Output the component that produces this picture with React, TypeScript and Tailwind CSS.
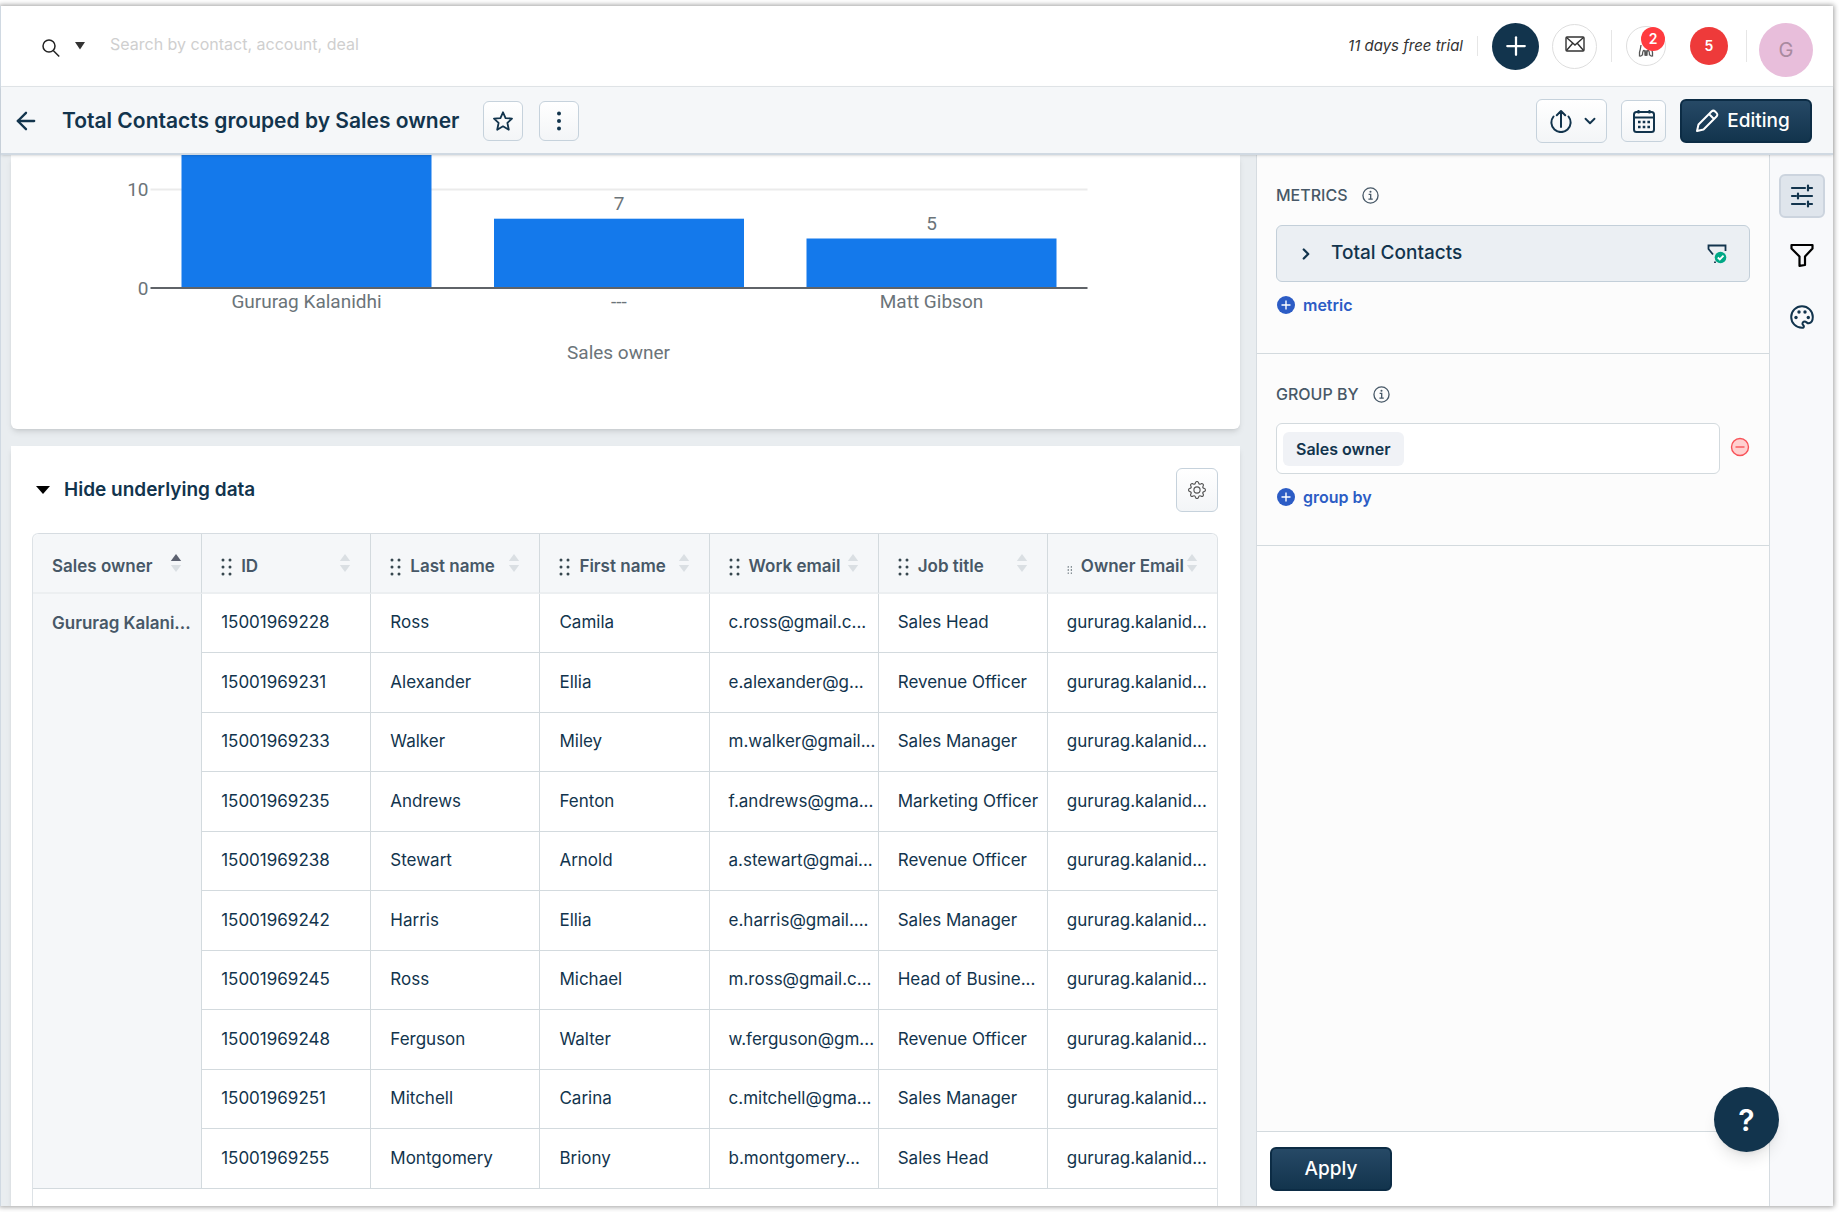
import { ArrowLeft, ChevronDown, ChevronRight, Plus } from "lucide-react";
import { BsGear } from "react-icons/bs";

const columns = [
  "ID",
  "Last name",
  "First name",
  "Work email",
  "Job title",
  "Owner Email"
];

const rows = [
  ["15001969228", "Ross", "Camila", "c.ross@gmail.c...", "Sales Head"],
  ["15001969231", "Alexander", "Ellia", "e.alexander@g...", "Revenue Officer"],
  ["15001969233", "Walker", "Miley", "m.walker@gmail...", "Sales Manager"],
  ["15001969235", "Andrews", "Fenton", "f.andrews@gma...", "Marketing Officer"],
  ["15001969238", "Stewart", "Arnold", "a.stewart@gmai...", "Revenue Officer"],
  ["15001969242", "Harris", "Ellia", "e.harris@gmail....", "Sales Manager"],
  ["15001969245", "Ross", "Michael", "m.ross@gmail.c...", "Head of Busine..."],
  ["15001969248", "Ferguson", "Walter", "w.ferguson@gm...", "Revenue Officer"],
  ["15001969251", "Mitchell", "Carina", "c.mitchell@gma...", "Sales Manager"],
  ["15001969255", "Montgomery", "Briony", "b.montgomery...", "Sales Head"]
];

const iconButton =
  "flex items-center justify-center rounded-md border border-[#c6d2dc] bg-linear-to-b from-white to-[#f3f5f7] text-[#12344d]";
const darkButton =
  "flex items-center justify-center rounded-md border-2 border-[#0c2c45] bg-linear-to-b from-[#264966] to-[#12344d] text-[19px] font-medium text-white";
const sectionTitle =
  "flex items-center gap-[14px] text-base leading-6 font-medium text-[#475867]";

const Grip = ({ small }: { small?: boolean }) => (
  <svg
    viewBox="0 0 12 18"
    className={small ? "mt-[6px] h-2 w-[6px] shrink-0" : "h-[18px] w-3 shrink-0"}
    fill="#37474f"
  >
    {[2, 9, 16].map((y) => (
      <g key={y}>
        <circle cx="2" cy={y} r="1.5" />
        <circle cx="9" cy={y} r="1.5" />
      </g>
    ))}
  </svg>
);

const SortArrows = ({ active }: { active?: boolean }) => (
  <svg viewBox="0 0 12 20" className="mb-2 h-5 w-3 shrink-0">
    <path d="M6 1l5.2 7H.8z" fill={active ? "#5c6170" : "#dadfe3"} />
    <path d="M6 19l5.2-7H.8z" fill="#dadfe3" />
  </svg>
);

const InfoIcon = () => (
  <svg viewBox="0 0 18 18" className="size-[17px]" fill="none" stroke="#475867" strokeWidth="1.4">
    <circle cx="9" cy="9" r="8" />
    <path d="M7 7.800h2.200v5M6.800 12.800h4.600" />
    <circle cx="9" cy="5" r="1.100" fill="#475867" stroke="none" />
  </svg>
);

const AddLink = ({ label }: { label: string }) => (
  <button className="flex items-center gap-[7px] text-base leading-6 font-semibold text-[#2c5cc5]">
    <svg viewBox="0 0 20 20" className="size-5">
      <circle cx="10" cy="10" r="9" fill="#2c5cc5" />
      <path d="M10 5.500v9M5.500 10h9" stroke="#fff" strokeWidth="1.4" />
    </svg>
    {label}
  </button>
);

const TopBar = () => (
  <header className="flex h-[81px] shrink-0 items-center border-b border-[#e3e7ea] pr-5 pl-10">
    <button className="flex items-center gap-[14px]" aria-label="Search scope">
      <svg viewBox="0 0 20 20" className="mt-1 size-5" fill="none" stroke="#222" strokeWidth="1.5">
        <circle cx="8" cy="8" r="6" />
        <path d="M12.200 12.500l6 6" />
      </svg>
      <svg viewBox="0 0 10 8" className="h-2 w-[10px]">
        <path d="M0 0h10L5 7.500z" fill="#333" />
      </svg>
    </button>
    <input
      className="ml-[25px] min-w-0 flex-1 pb-1 text-base text-[#333] outline-none placeholder:text-[#cfcfcf]"
      aria-label="Search"
      placeholder="Search by contact, account, deal"
    />
    <span className="text-[15px] text-[#333] italic">11 days free trial</span>
    <div className="ml-[14px] h-5 w-px bg-[#e6e6e6]" />
    <button
      className="ml-[14px] flex size-[47px] items-center justify-center rounded-full bg-[#12344d] text-white"
      aria-label="Add"
    >
      <Plus size={30} strokeWidth={1.8} />
    </button>
    <button
      className="ml-[13px] flex size-[45px] items-center justify-center rounded-full border border-[#dedede] pb-1"
      aria-label="Mail"
    >
      <svg viewBox="0 0 20 16" className="h-4 w-5" fill="none" stroke="#333" strokeWidth="1.4">
        <rect x="1" y="1" width="18" height="14" rx="1" />
        <path d="M1.500 1.500L10 9l8.500-7.500M1.500 14.500l6-7M18.500 14.500l-6-7" />
      </svg>
    </button>
    <div className="ml-[14px] h-8 w-px bg-[#e6e6e6]" />
    <button
      className="relative ml-[14px] flex size-10 items-end justify-center rounded-full border border-[#dedede] pb-2"
      aria-label="Announcements"
    >
      <svg viewBox="0 0 16 14" className="h-[14px] w-4" fill="none" stroke="#555" strokeWidth="1.300">
        <path d="M3 2C2.500 6 2.200 7 1.500 9.500V13c1.500.500 2 0 3-1.500M13 2c.500 4 .800 5 1.500 7.500V13c-1.500.500-2 0-3-1.500M4.500 12.500c0-3 .500-5 1.500-5s1 3 1 5M11.500 12.500c0-3-.500-5-1.500-5s-1 3-1 5M8 7v6M6.500 12h3" />
      </svg>
      <span className="absolute top-0 left-[14px] flex size-6 items-center justify-center rounded-full bg-[#ff3b3f] text-sm font-semibold text-white">
        2
      </span>
    </button>
    <button className="ml-6 flex size-[38px] items-center justify-center rounded-full bg-[#ee3a3a] text-sm font-semibold text-white">
      5
    </button>
    <div className="ml-[18px] h-8 w-px bg-[#e6e6e6]" />
    <button className="mt-2 ml-3 flex size-[54px] items-center justify-center rounded-full bg-[#e8bedb] text-xl text-[#a98a9f]">
      G
    </button>
  </header>
);

const TitleBar = () => (
  <div className="z-10 flex h-[68px] shrink-0 items-center border-b-2 border-[#d0d9e2] bg-[#f5f7f9] pt-[2px] pr-[21px] pl-[11px] shadow-sm">
    <button aria-label="Back" className="text-[#12344d]">
      <ArrowLeft size={28} />
    </button>
    <h1 className="ml-[22px] text-[21px] font-semibold text-[#12344d]">
      Total Contacts grouped by Sales owner
    </h1>
    <button className={`${iconButton} ml-6 size-10`} aria-label="Favourite">
      <svg viewBox="0 0 24 24" className="size-[22px]" fill="none" stroke="currentColor" strokeWidth="2" strokeLinejoin="round">
        <path d="M12 2.500l2.800 6.300 7 .600-5 4.600 1.500 7.500L12 17.800l-6.300 3.700L7.200 14l-5-4.600 7-.600z" />
      </svg>
    </button>
    <button className={`${iconButton} ml-4 size-10`} aria-label="More">
      <svg viewBox="0 0 24 24" className="size-6" fill="currentColor">
        <circle cx="12" cy="4.500" r="2" />
        <circle cx="12" cy="12" r="2" />
        <circle cx="12" cy="19.500" r="2" />
      </svg>
    </button>
    <div className="ml-auto flex items-center">
      <button className={`${iconButton} h-11 w-[71px] gap-2 pl-1`} aria-label="Export">
        <svg viewBox="0 0 24 24" className="size-6" fill="none" stroke="currentColor" strokeWidth="2" strokeLinecap="round" strokeLinejoin="round">
          <path d="M4.500 7.500a9.600 9.600 0 1 0 15 0M12 18V2.500M7.800 6.200L12 2l4.200 4.200" />
        </svg>
        <ChevronDown size={18} strokeWidth={2.5} />
      </button>
      <button className={`${iconButton} ml-[14px] h-[42px] w-[45px]`} aria-label="Schedule">
        <svg viewBox="0 0 24 24" className="size-6" fill="none" stroke="currentColor" strokeWidth="2">
          <rect x="2" y="3" width="20" height="20" rx="2.500" />
          <path d="M2 8.500h20M6.500 1v3.500M17.500 1v3.500" />
          <path d="M6 13h2.600M10.700 13h2.600M15.400 13H18M6 18h2.600M10.700 18h2.600M15.400 18H18" strokeWidth="2.600" />
        </svg>
      </button>
      <button className={`${darkButton} ml-[14px] h-11 w-[132px] gap-2 pr-[7px]`}>
        <svg viewBox="0 0 24 24" className="size-6" fill="none" stroke="currentColor" strokeWidth="2" strokeLinejoin="round">
          <path d="M2 22l1.500-6.500L16.500 2.500c1.200-1.200 2.600-1 3.600 0l1.400 1.400c1 1 1.200 2.400 0 3.600L8.500 20.500zM14 5l5 5" />
        </svg>
        Editing
      </button>
    </div>
  </div>
);

const bars = [
  { label: "Gururag Kalanidhi", value: 28 },
  { label: "---", value: 7 },
  { label: "Matt Gibson", value: 5 }
];

const Chart = () => (
  <section className="shrink-0 overflow-hidden rounded-b-md bg-white font-[Roboto,sans-serif] shadow-md">
    <svg className="h-[274px] w-full" viewBox="0 0 1228 274" role="img" aria-label="Total Contacts by Sales owner">
      <path d="M139 34.500h937" stroke="#ebebeb" strokeWidth="2" />
      {bars.map((bar, i) => (
        <rect
          key={bar.label}
          x={170 + i * 312.5}
          y={133 - Math.min(bar.value * 9.9, 133)}
          width="250"
          height={Math.min(bar.value * 9.9, 133)}
          fill="#1479eb"
        />
      ))}
      <path d="M139 133h937" stroke="#5f6368" strokeWidth="2" />
      <g fill="#6b7479" fontSize="19" textAnchor="middle">
        <text x="137" y="41" textAnchor="end">10</text>
        <text x="137" y="140" textAnchor="end">0</text>
        {bars.map((bar, i) => (
          <g key={bar.label}>
            <text x={295 + i * 312.5} y="153">{bar.label}</text>
            {i > 0 && (
              <text x={295 + i * 312.5} y={124 - bar.value * 9.9}>{bar.value}</text>
            )}
          </g>
        ))}
        <text x="607" y="204">Sales owner</text>
      </g>
    </svg>
  </section>
);

const UnderlyingData = () => (
  <section className="flex min-h-0 flex-1 flex-col overflow-hidden bg-white pt-[22px] pr-[22px] pl-[21px] shadow-md">
    <div className="flex items-center">
      <button className="flex items-center gap-[14px] pl-1 text-[19px] font-semibold text-[#12344d]">
        <svg viewBox="0 0 14 8" className="h-2 w-[14px]">
          <path d="M0 0h14L7 8z" />
        </svg>
        Hide underlying data
      </button>
      <button className={`${iconButton} ml-auto h-11 w-[42px]`} aria-label="Table settings">
        <BsGear size={18} color="#555" />
      </button>
    </div>
    <div className="mt-[21px] min-h-0 flex-1 rounded-t-md border-x border-[#dde2e6]">
      <table className="w-full table-fixed border-separate border-spacing-0 rounded-t-md border-t border-[#d6dce1] text-[17px] whitespace-nowrap text-[#12344d]">
        <thead>
          <tr className="h-[60px] bg-[#f5f7f9] text-left text-[#475867]">
            <th className="rounded-tl-md border-r border-b-2 border-r-[#d3dade] border-b-[#eceff1] px-[19px] pt-1 font-semibold">
              <div className="flex items-center justify-between pt-1">
                Sales owner
                <SortArrows active />
              </div>
            </th>
            {columns.map((name) => (
              <th
                key={name}
                className="border-r border-b-2 border-r-[#d3dade] border-b-[#eceff1] px-[19px] pt-1 font-semibold last:rounded-tr-md last:border-r-0"
              >
                <div className="flex items-center gap-2 pt-1">
                  <Grip small={name === "Owner Email"} />
                  <span className="min-w-0 flex-1">{name}</span>
                  <SortArrows />
                </div>
              </th>
            ))}
          </tr>
        </thead>
        <tbody>
          {rows.map((row, i) => (
            <tr key={row[0]} className="odd:h-[59px] even:h-[60px]">
              {i === 0 && (
                <th
                  rowSpan={rows.length}
                  className="border-r border-b border-[#d3dade] bg-[#f5f7f9] pt-[17px] pl-[19px] text-left align-top font-semibold text-[#475867]"
                >
                  Gururag Kalani...
                </th>
              )}
              {[...row, "gururag.kalanid..."].map((cell, j) => (
                <td
                  key={j}
                  className="border-r border-b border-[#d3dade] pl-[19px] last:border-r-0"
                >
                  {cell}
                </td>
              ))}
            </tr>
          ))}
        </tbody>
      </table>
    </div>
  </section>
);

const Panel = () => (
  <aside className="flex w-[514px] shrink-0 flex-col border-x border-[#d6dce1] bg-[#fcfcfc]">
    <section className="h-[199px] border-b border-[#d3dade] px-[19px] pt-7">
      <h2 className={sectionTitle}>
        METRICS
        <InfoIcon />
      </h2>
      <button className="mt-[18px] flex h-[57px] w-full items-center rounded-md border border-[#c3cfd9] bg-[#ebeff3] pr-[22px] pl-5 text-[19px] font-medium text-[#12344d]">
        <ChevronRight size={18} strokeWidth={3} />
        <span className="ml-4">Total Contacts</span>
        <svg viewBox="0 0 20 20" className="ml-auto size-5" fill="none" strokeWidth="1.800">
          <path d="M6 10.500L1.500 5V1.500h17V7M8 17.500V19" stroke="#12344d" />
          <circle cx="13.500" cy="13.500" r="5.800" fill="#00a886" />
          <path d="M10.800 13.500l2 2 3.700-3.800" stroke="#fff" />
        </svg>
      </button>
      <div className="mt-[11px]">
        <AddLink label="metric" />
      </div>
    </section>
    <section className="h-48 border-b border-[#d3dade] px-[19px] pt-7">
      <h2 className={sectionTitle}>
        GROUP BY
        <InfoIcon />
      </h2>
      <div className="mt-[17px] flex items-center gap-[10px]">
        <div className="flex h-[51px] flex-1 items-center rounded-md border border-[#d3dade] bg-white px-[6px]">
          <span className="rounded-md bg-[#f0f2f6] px-[13px] py-1 text-base leading-[26px] font-semibold text-[#12344d]">
            Sales owner
          </span>
        </div>
        <button className="pb-1" aria-label="Remove group">
          <svg viewBox="0 0 20 20" className="size-5">
            <circle cx="10" cy="10" r="8.500" fill="#ffd0d0" stroke="#f85359" strokeWidth="1.400" />
            <path d="M5.500 10h9" stroke="#f85359" strokeWidth="1.400" />
          </svg>
        </button>
      </div>
      <div className="mt-[11px]">
        <AddLink label="group by" />
      </div>
    </section>
    <footer className="mt-auto h-[75px] border-t border-[#d3dade] bg-white px-[13px] pt-[15px]">
      <button className={`${darkButton} h-11 w-[122px]`}>Apply</button>
    </footer>
  </aside>
);

const Rail = () => (
  <nav className="flex w-[63px] shrink-0 flex-col items-center bg-[#f8f9fb] pt-[19px] text-[#12344d]">
    <button
      className="flex h-11 w-[46px] items-center justify-center rounded-md border-2 border-[#ccd4de] bg-[#dfe5ec]"
      aria-label="Configure"
    >
      <svg viewBox="0 0 24 24" className="size-6" fill="none" stroke="currentColor" strokeWidth="2.200" strokeLinecap="round">
        <path d="M2 4h13M18 4h4M18 1.500v5M2 12h4M8 9.500v5M10 12h12M2 20h13M18 20h4M18 17.500v5" />
      </svg>
    </button>
    <button className="mt-[25px] text-black" aria-label="Filters">
      <svg viewBox="0 0 24 24" className="size-6" fill="none" stroke="currentColor" strokeWidth="2.200" strokeLinejoin="round">
        <path d="M1.500 2h21v3.500L15 13.500V22l-5.500.800v-9.300L1.500 5.500z" />
      </svg>
    </button>
    <button className="mt-[38px]" aria-label="Appearance">
      <svg viewBox="0 0 24 24" className="size-6" fill="none" stroke="currentColor" strokeWidth="2" strokeLinejoin="round">
        <path d="M12 1.200a10.800 10.800 0 0 0 0 21.600c1.600 0 2.200-.800 1.800-2l-1.200-1.500c-.600-1.500.600-2.800 2.200-2.800 1.500 0 2.200 2 4 1.800 3-.500 4-3.500 4-6.300A10.800 10.800 0 0 0 12 1.200z" />
        <g fill="currentColor" stroke="none">
          <circle cx="6" cy="12.500" r="1.700" />
          <circle cx="9" cy="7" r="1.700" />
          <circle cx="15" cy="7" r="1.700" />
          <circle cx="18.300" cy="12.500" r="1.700" />
        </g>
      </svg>
    </button>
  </nav>
);

const App = () => {
  return (
    <div className="h-screen bg-white pt-[6px] pr-[6px] pb-[6px] font-[Inter,sans-serif]">
      <div className="relative flex h-full flex-col border-l border-[#d0d9e2] bg-white shadow-[0_0_5px_1px_#a0a0a0]">
        <TopBar />
        <TitleBar />
        <div className="flex min-h-0 flex-1">
          <main className="flex min-w-0 flex-1 flex-col gap-[17px] overflow-hidden bg-[#e9edf0] pr-4 pl-[10px]">
            <Chart />
            <UnderlyingData />
          </main>
          <Panel />
          <Rail />
        </div>
        <button
          className="absolute right-[54px] bottom-[54px] flex size-[65px] items-center justify-center rounded-full bg-[#12344d] text-3xl font-semibold text-white shadow-lg"
          aria-label="Help"
        >
          ?
        </button>
      </div>
    </div>
  );
};

export default App;
